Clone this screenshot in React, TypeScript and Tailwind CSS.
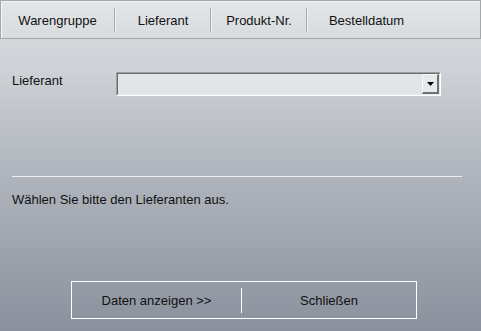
import React from "react";

export default function App() {
  return (
    <div className="w-[481px] h-[331px] flex flex-col bg-[linear-gradient(to_bottom,#d9dde0_0%,#cfd3d7_20%,#b2b6be_50%,#9aa0aa_80%,#8b919c_100%)] font-['Liberation_Sans',Arial,sans-serif] text-[13px] leading-[15px] text-[#111] overflow-hidden">
      {/* Tab bar */}
      <div className="h-[39px] shrink-0 flex items-center border border-[#a4a6a8] bg-[linear-gradient(to_bottom,#e4e7e9,#d7dbde)] shadow-[inset_1px_1px_0_#f4f6f7]">
        <div className="w-[113px] text-center pt-[1px]">Warengruppe</div>
        <div className="w-[2px] h-[24px] border-l border-[#a9abad] border-r border-r-[#eef0f1]" />
        <div className="w-[94px] text-center pt-[1px]">Lieferant</div>
        <div className="w-[2px] h-[24px] border-l border-[#a9abad] border-r border-r-[#eef0f1]" />
        <div className="w-[94px] text-center pt-[1px]">Produkt-Nr.</div>
        <div className="w-[2px] h-[24px] border-l border-[#a9abad] border-r border-r-[#eef0f1]" />
        <div className="w-[117px] text-center pt-[1px]">Bestelldatum</div>
      </div>

      {/* Lieferant row */}
      <div className="flex items-start mt-[33px]">
        <div className="w-[116px] shrink-0 pl-[12px] pt-[1px]">Lieferant</div>
        <div className="w-[325px] h-[24px] border border-t-[#a0a0a0] border-l-[#a0a0a0] border-b-white border-r-white">
          <div className="h-full border border-t-[#696969] border-l-[#696969] border-b-[#e6e8ea] border-r-[#e6e8ea] bg-[#e1e5e7] flex justify-end">
            <div className="w-[17px] h-full bg-[#e6e8ea] border-t border-l border-t-[#f7f8f8] border-l-[#f7f8f8] border-b-2 border-r-2 border-b-[#6f7173] border-r-[#6f7173] flex items-center justify-center">
              <svg width="7" height="4" viewBox="0 0 7 4">
                <polygon points="0,0 7,0 3.5,4" fill="#000" />
              </svg>
            </div>
          </div>
        </div>
      </div>

      {/* Separator */}
      <div className="mt-[80px] ml-[12px] w-[450px] h-[1px] bg-[#eceef0]" />

      {/* Message */}
      <div className="mt-[15px] pl-[12px]">Wählen Sie bitte den Lieferanten aus.</div>

      {/* Buttons */}
      <div className="mt-auto mb-[12px] ml-[71px] w-[346px] h-[38px] border border-white flex items-center">
        <div className="w-[169px] text-center pt-[1px]">Daten anzeigen &gt;&gt;</div>
        <div className="w-[1px] h-[25px] bg-white" />
        <div className="flex-1 text-center pt-[1px]">Schließen</div>
      </div>
    </div>
  );
}
